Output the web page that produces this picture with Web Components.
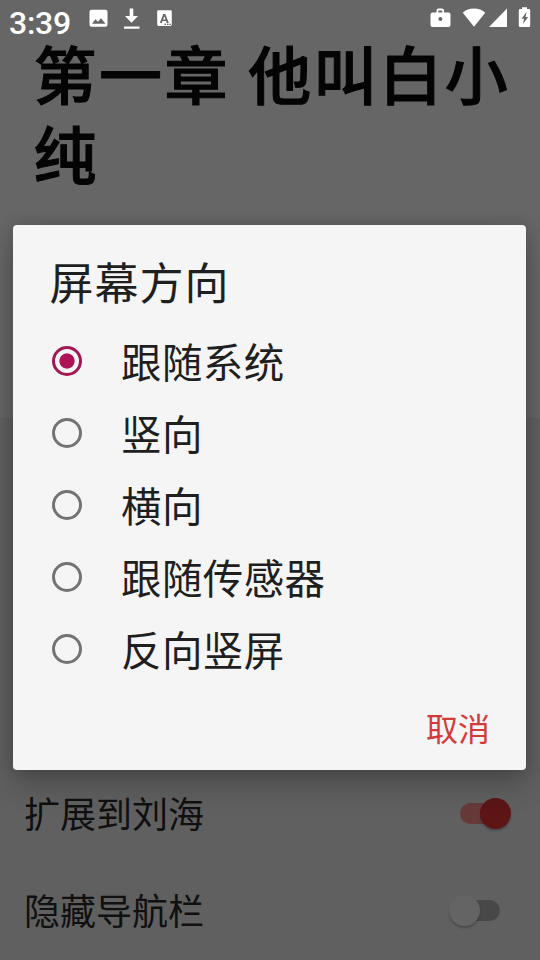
<!DOCTYPE html>
<html lang="zh-CN">
<head>
<meta charset="utf-8">
<title>屏幕方向</title>
<style>
    html, body {
        margin: 0;
        height: 100%;
        overflow: hidden;
    }
    body {
        background: #666;
        font-family: Roboto, "Noto Sans CJK SC", sans-serif;
    }
</style>
</head>
<body>
<reader-screen>
    <status-bar slot="status" time="3:39"></status-bar>
    <span slot="heading">第一章 他叫白小纯</span>
    <setting-row slot="settings" checked>扩展到刘海</setting-row>
    <setting-row slot="settings">隐藏导航栏</setting-row>
    <choice-dialog slot="dialog">
        <span slot="title">屏幕方向</span>
        <radio-option checked>跟随系统</radio-option>
        <radio-option>竖向</radio-option>
        <radio-option>横向</radio-option>
        <radio-option>跟随传感器</radio-option>
        <radio-option>反向竖屏</radio-option>
        <span slot="action">取消</span>
    </choice-dialog>
</reader-screen>
<script>
class ReaderScreen extends HTMLElement {
    constructor() {
        super();
        this.attachShadow({mode: 'open'}).innerHTML = `
            <style>
                :host {
                    display: grid;
                    grid-template-rows: 418px 1fr;
                    position: relative;
                    width: 540px;
                    height: 960px;
                    overflow: hidden;
                }
                .page {
                    background: #666;
                    display: flex;
                    flex-direction: column;
                }
                h1 {
                    margin: 0;
                    padding: 2px 23px 0 33.600px;
                    font-size: 63px;
                    line-height: 80px;
                    letter-spacing: 2.5px;
                    font-weight: 500;
                    color: #040404;
                    -webkit-text-stroke: 1px #040404;
                }
                .panel {
                    background: #606060;
                    display: flex;
                    flex-direction: column;
                    justify-content: flex-end;
                    padding-bottom: 1px;
                }
                .overlay {
                    position: absolute;
                    inset: 0;
                    padding: 225px 14px 0 13px;
                }
            </style>
            <div class="page">
                <slot name="status"></slot>
                <h1><slot name="heading"></slot></h1>
            </div>
            <div class="panel"><slot name="settings"></slot></div>
            <div class="overlay"><slot name="dialog"></slot></div>
        `;
    }
}
customElements.define('reader-screen', ReaderScreen);

class StatusBar extends HTMLElement {
    connectedCallback() {
        this.attachShadow({mode: 'open'}).innerHTML = `
            <style>
                :host {
                    display: flex;
                    justify-content: space-between;
                    height: 36px;
                    color: #fff;
                    font-size: 32px;
                    font-weight: 500;
                }
                div { display: flex; }
                .time {
                    line-height: 46px;
                    width: 79px;
                    padding-left: 9px;
                    letter-spacing: -.3px;
                }
                svg { display: block; fill: currentColor; }
            </style>
            <div>
                <span class="time">${this.getAttribute('time')}</span>
                <svg width="100" height="36">
                    <path fill-rule="evenodd" d="M3.500 9.700h14q2 0 2 2v13q0 2-2 2h-14q-2 0-2-2v-13q0-2 2-2zM4 23.700h13.500l-4.500-5.500-3 3.500-2.500-2.500z"/>
                    <path d="M41.700 8.500h3.600V16h4.700l-6.500 6.800L37 16h4.700zM36 26.500h15.500v2.300H36z"/>
                    <path fill-rule="evenodd" d="M70.500 10.300h12q1.300 0 1.300 1.300v13q0 1.300-1.300 1.300h-12q-1.300 0-1.300-1.300v-13q0-1.300 1.300-1.300zM75.300 14l-3.500 9h2l.7-2h3.600l.7 2h2l-3.500-9zM76.300 16.300l1.200 3.200h-2.400zM76.500 23.700v1.300H78v-1.300zM79 23.700v1.300h1.500v-1.300zM81.500 23.700v1.300H83v-1.300z"/>
                </svg>
            </div>
            <svg width="112" height="36">
                <path fill-rule="evenodd" d="M4.500 12.500h4v-2q0-2 2-2h3.500q2 0 2 2v2h4.500q2 0 2 2V25q0 2-2 2h-16q-2 0-2-2V14.500q0-2 2-2zM10.300 12.500h4v-2h-4zM12.400 17a2 2 0 1 0 0 4 2 2 0 0 0 0-4z"/>
                <path d="M46 26.800L34.800 12.700Q39.500 8.500 46 8.500t11.200 4.200z"/>
                <path d="M79 8.500V27H61z"/>
                <path fill-rule="evenodd" d="M94 7.200h5V9h2q1.200 0 1.200 1.200v15.600q0 1.200-1.200 1.200h-9q-1.200 0-1.200-1.200V10.200Q90.800 9 92 9h2zM98.500 12l-5 6.800h2.600l-1 5.200 5-7h-2.600z"/>
            </svg>
        `;
    }
}
customElements.define('status-bar', StatusBar);

class SettingRow extends HTMLElement {
    constructor() {
        super();
        this.attachShadow({mode: 'open'}).innerHTML = `
            <style>
                :host {
                    display: flex;
                    align-items: center;
                    justify-content: space-between;
                    height: 97px;
                    padding: 0 24px;
                    font-size: 36px;
                    color: #101010;
                }
                .label { padding-bottom: 4px; }
                .switch {
                    --track: #484848;
                    --thumb: #646464;
                    display: flex;
                    align-items: center;
                    width: 40px;
                    height: 21px;
                    margin-right: 16px;
                    border-radius: 11px;
                    background: var(--track);
                }
                .thumb {
                    width: 31px;
                    height: 31px;
                    flex: none;
                    margin-left: -11px;
                    border-radius: 50%;
                    background: var(--thumb);
                    box-shadow: 0 2px 2px rgba(0, 0, 0, .22);
                }
                :host([checked]) .switch {
                    --track: #673a3a;
                    --thumb: #5d1516;
                }
                :host([checked]) .thumb { margin-left: 20px; }
            </style>
            <span class="label"><slot></slot></span>
            <div class="switch"><div class="thumb"></div></div>
        `;
    }
}
customElements.define('setting-row', SettingRow);

class ChoiceDialog extends HTMLElement {
    constructor() {
        super();
        this.attachShadow({mode: 'open'}).innerHTML = `
            <style>
                :host {
                    display: flex;
                    flex-direction: column;
                    box-sizing: border-box;
                    height: 545px;
                    border-radius: 4px;
                    background: #f5f5f5;
                    color: #1f1f1f;
                    box-shadow: 0 14px 30px rgba(0, 0, 0, .24), 0 0 14px rgba(0, 0, 0, .14);
                }
                .title {
                    height: 100px;
                    line-height: 121px;
                    padding-left: 36.500px;
                    font-size: 44px;
                    letter-spacing: 1px;
                }
                .action {
                    align-self: flex-end;
                    margin-top: 21px;
                    padding-right: 36px;
                    font-size: 32px;
                    line-height: 48px;
                    color: #d63a38;
                }
            </style>
            <div class="title"><slot name="title"></slot></div>
            <slot></slot>
            <div class="action"><slot name="action"></slot></div>
        `;
    }
}
customElements.define('choice-dialog', ChoiceDialog);

class RadioOption extends HTMLElement {
    constructor() {
        super();
        this.attachShadow({mode: 'open'}).innerHTML = `
            <style>
                :host {
                    display: flex;
                    align-items: center;
                    gap: 39px;
                    height: 72px;
                    padding-left: 39px;
                    font-size: 40.500px;
                    letter-spacing: .4px;
                }
                .ring {
                    box-sizing: border-box;
                    width: 30px;
                    height: 30px;
                    border: 3px solid #737373;
                    border-radius: 50%;
                }
                .label { padding-bottom: 2px; }
                :host([checked]) .ring {
                    border-color: #a31852;
                    background: radial-gradient(circle, #ad1457 7.200px, transparent 8px);
                }
            </style>
            <span class="ring"></span>
            <span class="label"><slot></slot></span>
        `;
    }
}
customElements.define('radio-option', RadioOption);
</script>
</body>
</html>
